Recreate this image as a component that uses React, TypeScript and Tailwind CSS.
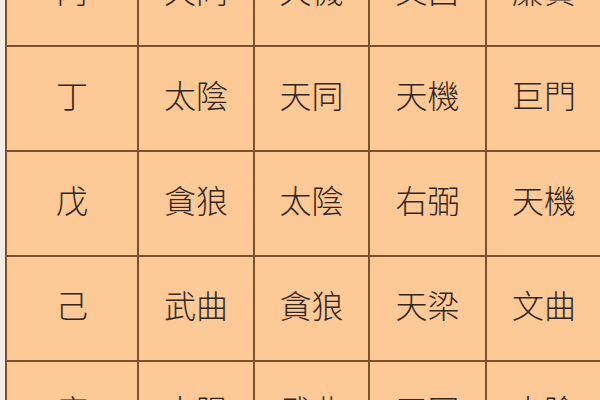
import React from 'react';

const rows: string[][] = [
  ['丙', '天同', '天機', '文昌', '廉貞'],
  ['丁', '太陰', '天同', '天機', '巨門'],
  ['戊', '貪狼', '太陰', '右弼', '天機'],
  ['己', '武曲', '貪狼', '天梁', '文曲'],
  ['庚', '太陽', '武曲', '天同', '太陰'],
];

export default function App() {
  return (
    <div className="h-[400px] w-[600px] overflow-hidden bg-[#f3ece5] pl-[5px]">
      {/* star table, scrolled so the first row is cut off at the top */}
      <div
        className="-mt-[60px] grid w-[598px] grid-cols-[130px_114px_113px_115px_114px] auto-rows-[103px] gap-[2px] bg-[#7e512c] p-[2px] text-[32px] text-[#33261d]"
        style={{ fontFamily: '"Noto Sans CJK TC", "Noto Sans CJK SC", sans-serif' }}
      >
        {rows.map((r, i) =>
          r.map((c, j) => (
            <div key={`${i}-${j}`} className="flex items-center justify-center bg-[#fdc997] pb-[10px] font-light leading-none">
              {c}
            </div>
          ))
        )}
      </div>
    </div>
  );
}
